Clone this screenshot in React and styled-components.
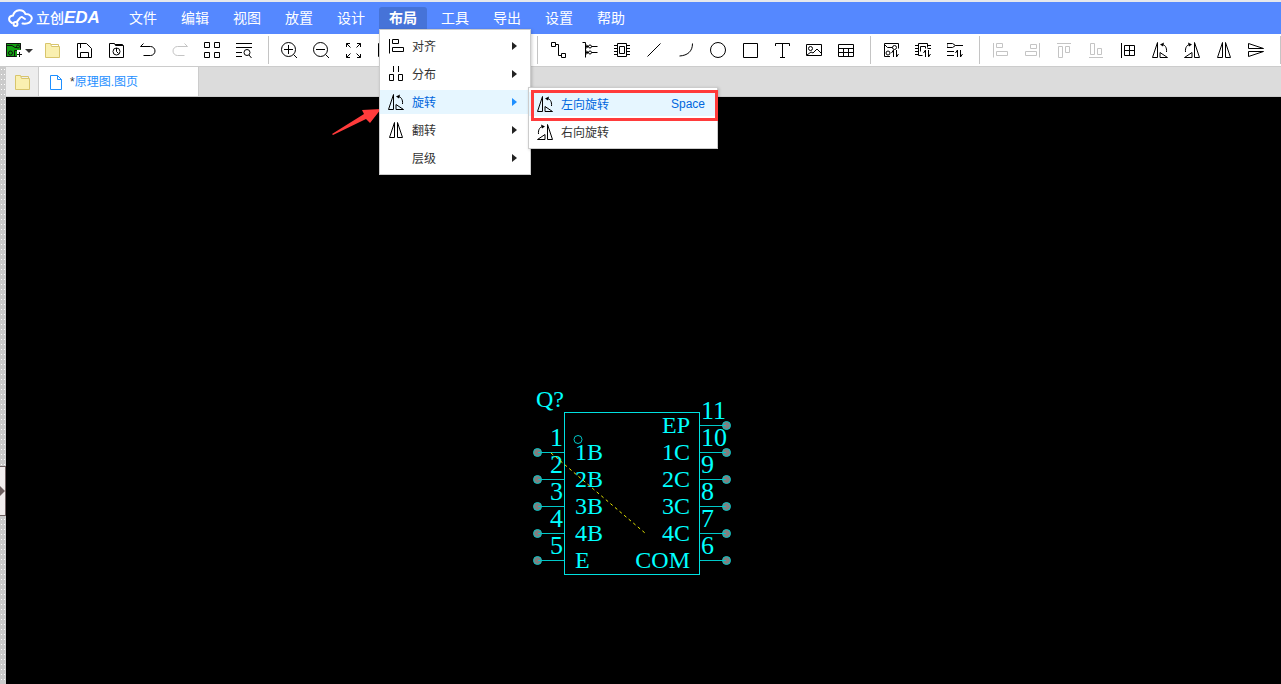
import React from 'react';
import styled, {createGlobalStyle} from 'styled-components';

const GlobalStyle = createGlobalStyle`
    *{
        box-sizing: border-box;
    }

    body{
        margin: 0;
        font-family: "Liberation Sans", "Noto Sans CJK SC", sans-serif;
        font-size: 12px;
        color: #333;
    }

    button{
        font: inherit;
        color: inherit;
        border: 0;
        padding: 0;
        background: none;
    }

    ul{
        list-style: none;
        margin: 0;
        padding: 0;
    }
`;

const Page = styled.div`
    display: flex;
    flex-direction: column;
    min-height: 100vh;
    overflow: hidden;
`;

const Header = styled.header`
    display: flex;
    align-items: center;
    height: 34px;
    padding-left: 8px;
    background: #5588ff;
    border-top: 2px solid #e6e8ec;
`;

const Logo = styled.a`
    display: flex;
    align-items: center;
    width: 111px;
    color: #fff;
    text-decoration: none;
    font-size: 14px;
    font-weight: 500;
    line-height: 20px;

    svg{
        margin-right: 3px;
    }

    em{
        font-size: 17px;
        font-weight: bold;
    }
`;

const MenuBar = styled.ul`
    display: flex;
    gap: 4px;
`;

const MenuEntry = styled.li`
    position: relative;
`;

const MenuButton = styled.button`
    display: block;
    width: 48px;
    height: 22px;
    line-height: 22px;
    font-size: 14px;
    color: #fff;
    text-align: center;
    white-space: nowrap;
    font-weight: ${({$open}) => $open ? 'bold' : 'normal'};
    background: ${({$open}) => $open ? '#4673d8' : 'transparent'};
    border-radius: 3px 3px 0 0;
`;

const Dropdown = styled.ul`
    position: absolute;
    z-index: 5;
    top: ${({$sub}) => $sub ? '-3px' : '22px'};
    left: ${({$sub}) => $sub ? '148px' : '0'};
    width: ${({$sub}) => $sub ? '190px' : '152px'};
    display: flex;
    flex-direction: column;
    gap: 4px;
    padding: 4px 0;
    background: #fff;
    border: 1px solid #ccc;
    box-shadow: 1px 1px 3px rgba(0, 0, 0, 0.2);
`;

const DropdownEntry = styled.li`
    position: relative;
`;

const DropdownButton = styled.button`
    display: flex;
    align-items: center;
    gap: 8px;
    width: 100%;
    height: 24px;
    padding: 0 12px 0 8px;
    color: ${({$active}) => $active ? '#0066dd' : '#333'};
    background: ${({$active}) => $active ? '#e6f6ff' : 'transparent'};

    svg{
        color: #000;
    }
`;

const ItemLabel = styled.span`
    flex: 1;
    padding-bottom: 2px;
    text-align: left;
`;

const Highlight = styled.li`
    position: absolute;
    top: 2px;
    left: 2px;
    right: -1px;
    height: 31px;
    border: 3px solid #ff3b3b;
    pointer-events: none;
`;

const Toolbar = styled.div`
    display: flex;
    align-items: center;
    height: 33px;
    padding-left: 4px;
    background: #fff;
    border-bottom: 1px solid #ccc;
    overflow: hidden;
`;

const ToolButton = styled.button`
    flex: none;
    display: flex;
    align-items: center;
    justify-content: center;
    width: 32px;
    height: 32px;
    color: ${({disabled}) => disabled ? '#c4c4c4' : '#000'};
`;

const Separator = styled.div`
    flex: none;
    width: 1px;
    height: 28px;
    margin: 0 4px 0 8px;
    background: #c4c4c4;
`;

const Workspace = styled.div`
    flex: 1;
    display: flex;
`;

const Splitter = styled.div`
    flex: none;
    width: 6px;
    background-color: #cbcbcb;
    background-image: radial-gradient(circle at center, #fff 1px, transparent 1px);
    background-size: 3px 5px;
`;

const CollapseButton = styled.button`
    display: flex;
    align-items: center;
    width: 6px;
    height: 50px;
    margin-top: 399px;
    background: #f2eeee;
    border: 1px solid #6e6060;
    border-left-width: 0;
`;

const Editor = styled.main`
    flex: 1;
    display: flex;
    flex-direction: column;
    min-width: 0;
`;

const TabBar = styled.div`
    display: flex;
    height: 30px;
    background: #dcdcdc;
    border-bottom: 1px solid #ccc;
`;

const HomeTab = styled.button`
    display: flex;
    align-items: center;
    justify-content: center;
    width: 33px;
    background: #ededed;
    border-right: 1px solid #ccc;
`;

const FileTab = styled.button`
    display: flex;
    align-items: center;
    gap: 6px;
    width: 160px;
    padding-left: 9px;
    color: #1e8fff;
    background: #fff;
    border-right: 1px solid #ccc;

    span{
        padding-bottom: 2px;
    }

    b{
        font-weight: normal;
        color: #333;
    }
`;

const Canvas = styled.div`
    flex: 1;
    position: relative;
    background: #000;
`;

const Schematic = styled.svg`
    position: absolute;
    left: 524px;
    top: 283px;
    font-family: "Liberation Serif", serif;
`;

const PinText = styled.text`
    font-size: ${({$number}) => $number ? '26px' : '24px'};
    fill: #0ff;
    stroke: none;
`;

const Pointer = styled.svg`
    position: absolute;
    left: 326px;
    top: 11px;
`;

const icons = {
    pcb: <>
        <path d="M0 1h15v7h-4v7H0z" fill="#12a012" stroke="none" />
        <path d="M.5 1.5h14v6M.5 1.5v13h10M1 3.5h5l3 2h2" />
        <circle cx="12" cy="4.5" r="1.5" />
        <circle cx="4.5" cy="11" r="2" />
        <path d="M8.500 14V8.5H11M11 12.5h5M13.5 10v5" />
    </>,
    folder: <>
        <path d="M1.500 1.500h5l1 3h8v11h-14z" fill="#faf0b0" stroke="#d8c56c" />
        <path d="M7 2.500h7.500v2" stroke="#d8c56c" />
    </>,
    save: <path d="M1.500 1.500h9l5 5v9h-14zM4.500 15v-4.500h8V15M4.500 2v4" />,
    history: <>
        <path d="M1.500 1.500h5l1 2h8v12h-14zM7 2.500h7.500v1" />
        <circle cx="8.500" cy="9.500" r="3.500" />
        <path d="M8.500 6v3.500l2 2" />
    </>,
    undo: <path d="M3.5 1.5l-3 3h10a4.5 4.5 0 0 1 0 9h-7" />,
    redo: <path d="M12.5 1.5l3 3h-10a4.5 4.5 0 0 0 0 9h7" />,
    grid: <path d="M.5.5h5v5h-5zM10.5.5h5v5h-5zM.5 10.5h5v5h-5zM10.5 10.5h5v5h-5z" />,
    find: <>
        <path d="M0 1.5h16M0 5.5h16M0 10.5h6M0 14.5h6M13 13l2.5 3" />
        <circle cx="11" cy="10.5" r="3" />
    </>,
    zoomIn: <>
        <circle cx="7.5" cy="7.5" r="7" />
        <path d="M12.5 12.5l3.5 3.5M3 7.5h9M7.5 3v9" />
    </>,
    zoomOut: <>
        <circle cx="7.5" cy="7.5" r="7" />
        <path d="M12.5 12.5l3.5 3.5M3 7.5h9" />
    </>,
    fit: <path d="M1.5 5V1.5H5M12 1.5h3.500V5M15.500 12v3.5H12M5 15.5H1.5V12M1.5 1.5l4 4M15.500 1.5l-4 4M15.500 15.5l-4-4M1.5 15.5l4-4" />,
    frame: <path d="M1.500 1.5h14v13h-14z" />,
    wire: <path d="M1.5.5h4v4h-4zM5.5 2.5h3v11h3M11.5 11.5h4v4h-4z" />,
    bus: <>
        <path d="M.5.5h3v15M3.5 2.5l3 2M3.5 8.5l3 2M3.5 6.5l3-2M3.5 12.5l3-2M3.5 4.5h3M3.500 10.500h3M9.500 4.500h6M9.5 10.5h6" />
        <circle cx="8" cy="4.5" r="1.5" />
        <circle cx="8" cy="10.5" r="1.5" />
    </>,
    chip: <path d="M3.5 1.5h9v13h-9zM5.5 4.5h5v7h-5zM0 3.5h3.5M0 6.5h3.5M0 9.5h3.5M0 12.5h3.5M12.5 3.5H16M12.5 6.5H16M12.5 9.5H16M12.5 12.5H16" />,
    line: <path d="M1.5 14.5l13-13" />,
    arc: <path d="M14.5 1.5c0 8-5 12-13 12.5" />,
    circle: <circle cx="8" cy="8" r="7.5" />,
    rect: <path d="M1.5 1.5h14v14h-14z" />,
    text: <path d="M1.5 4V1.5h14V4M8.5 1.5v14M6 15.5h5" />,
    image: <>
        <path d="M.5 2.5h15v11H.5zM1 13l4-3 2 1 4-4 4 4" />
        <circle cx="4.5" cy="6.5" r="2" />
    </>,
    table: <path d="M.5 2.5h15v12H.5zM.5 6.5h15M.5 10.5h15M5.5 6.5v8M10.5 6.5v8" />,
    boardSwap: <>
        <path d="M7 14.5H1.5v-13h14v5M1.5 2.5l3 3h5M10.500 15V8l-2 3M13.500 8v7l2-3" />
        <circle cx="11.5" cy="5.5" r="2" />
        <circle cx="5" cy="11" r="2" />
    </>,
    chipSwap: <path d="M7.5 13.5h-4v-12h9v4M5.5 9.5v-5h5v2M0 3.5h3.5M0 6.5h3.5M0 9.5h3.5M0 12.5h3.5M12.5 3.5H16M12.5 6.5H16M10.5 15V8l-2 3M13.5 8v7l2-3" />,
    listSwap: <path d="M0 1.5h5.5l3 2-3 2H0zM8.5 3.5H16M0 9.5h7M0 13.5h7M10.5 15V8l-2 3M13.5 8v7l2-3" />,
    alignLeft: <path d="M1.5 1v14.500M4.500 1.5h6v4h-6zM4.500 9.5h11v4h-11z" />,
    alignRight: <path d="M15.5 1v14.500M6.5 2.5h6v4h-6zM1.5 9.5h11v4h-11z" />,
    alignTop: <path d="M1 1.5h14M2.5 4.5h4v11h-4zM9.5 4.5h4v6h-4z" />,
    alignBottom: <path d="M1 15.5h14M2.5 1.5h4v11h-4zM9.5 6.5h4v6h-4z" />,
    alignGrid: <path d="M1.5 1v15M4.5 3.5h10v10h-10zM9.5 3.5v10M4.5 8.5h10" />,
    distribute: <path d="M5.500 0v6M10.500 0v6M1.500 8.5h4v6h-4zM10.500 8.5h4v6h-4z" />,
    rotateLeft: <>
        <path d="M.5 15.5L5.5.5v15zM8 10.500l7.5 5H8z" />
        <path d="M9.5 2.5c3.500 0 5.500 3 5 7.5" />
        <path d="M8 2.500l4-2-1 4z" fill="currentColor" stroke="none" />
    </>,
    rotateRight: <>
        <path d="M15.5 15.5L10.5.5v15zM8 10.500L.5 15.5H8z" />
        <path d="M6.5 2.5c-3.500 0-5.500 3-5 7.5" />
        <path d="M8 2.500l-4-2 1 4z" fill="currentColor" stroke="none" />
    </>,
    flipH: <path d="M1.500 15.5L6.5.5v15zM14.500 15.5L9.5.5v15z" />,
    flipV: <path d="M.5 1.500l15 5H.5zM.5 14.500l15-5H.5z" />,
    file: <path d="M2.5 1.5h7l4 4v10h-11zM9.5 1.5v4h4" />,
};

const Icon = ({name}) => (
    <svg width="16" height="16" viewBox="0 0 16 16" fill="none" stroke="currentColor" aria-hidden="true">
        {icons[name]}
    </svg>
);

const SubArrow = ({active}) => (
    <svg width="6" height="8" viewBox="0 0 6 8" aria-hidden="true">
        <path d="M0 0l5 4-5 4z" fill={active ? '#1e8fff' : '#222'} />
    </svg>
);

const layoutMenu = [
    {label: '对齐', icon: 'alignLeft', arrow: true},
    {label: '分布', icon: 'distribute', arrow: true},
    {
        label: '旋转',
        icon: 'rotateLeft',
        arrow: true,
        active: true,
        children: [
            {label: '左向旋转', icon: 'rotateLeft', shortcut: 'Space', active: true},
            {label: '右向旋转', icon: 'rotateRight'},
        ],
    },
    {label: '翻转', icon: 'flipH', arrow: true},
    {label: '层级', arrow: true},
];

const menus = ['文件', '编辑', '视图', '放置', '设计', '布局', '工具', '导出', '设置', '帮助'];

// each inner list is one block of the toolbar, blocks are split by a separator
const tools = [
    [['folder', '打开'], ['save', '保存'], ['history', '历史'], ['undo', '撤销'], ['redo', '重做', true], ['grid', '元件库'], ['find', '查找']],
    [['zoomIn', '放大'], ['zoomOut', '缩小'], ['fit', '适合窗口'], ['frame', '框选'], ['rect', '选择'], ['flipH', '镜像'], ['table', '网格'], ['find', '浏览']],
    [['wire', '导线'], ['bus', '总线'], ['chip', '器件'], ['line', '线条'], ['arc', '圆弧'], ['circle', '圆形'], ['rect', '矩形'], ['text', '文本'], ['image', '图片'], ['table', '表格']],
    [['boardSwap', '更新PCB'], ['chipSwap', '更新器件'], ['listSwap', '更新网络']],
    [['alignLeft', '左对齐', true], ['alignRight', '右对齐', true], ['alignTop', '顶对齐', true], ['alignBottom', '底对齐', true], ['alignGrid', '对齐网格'], ['rotateLeft', '左转'], ['rotateRight', '右转'], ['flipH', '水平翻转'], ['flipV', '垂直翻转']],
];

const leftPins = ['1B', '2B', '3B', '4B', 'E'];
const rightPins = ['EP', '1C', '2C', '3C', '4C', 'COM'];
const pitch = 27;

const MenuItem = ({item}) => (
    <DropdownEntry>
        <DropdownButton $active={item.active}>
            <Icon name={item.icon} />
            <ItemLabel>{item.label}</ItemLabel>
            {item.shortcut}
            {item.arrow && <SubArrow active={item.active} />}
        </DropdownButton>
        {item.children &&
            <Dropdown $sub>
                {item.children.map(child => <MenuItem key={child.label} item={child} />)}
                <Highlight />
            </Dropdown>
        }
    </DropdownEntry>
);

const TopMenu = () => (
    <Header>
        <Logo href="#" aria-label="立创EDA">
            <svg width="25" height="20" viewBox="0 0 25 20" fill="none" stroke="#fff" strokeWidth="2" strokeLinecap="round">
                <path d="M4 15C0 13 0 8 5 7.500 7 1 15 .5 17.500 6c5 0 7 3 6 5.500-1 3.500-5 4.500-9 4" />
                <path d="M17 11l-3-2c-2-1-3.500 4-5.500 5" />
                <circle cx="7.500" cy="16" r="2" />
            </svg>
            立创<em>EDA</em>
        </Logo>
        <nav>
            <MenuBar>
                {menus.map(name => (
                    <MenuEntry key={name}>
                        <MenuButton $open={name === '布局'}>{name}</MenuButton>
                        {name === '布局' &&
                            <Dropdown>
                                {layoutMenu.map(item => <MenuItem key={item.label} item={item} />)}
                            </Dropdown>
                        }
                    </MenuEntry>
                ))}
            </MenuBar>
        </nav>
    </Header>
);

const Tools = () => (
    <Toolbar>
        <ToolButton aria-label="新建">
            <svg width="28" height="16" viewBox="0 0 28 16" fill="none" stroke="#111" aria-hidden="true">
                {icons.pcb}
                <path d="M19 7h8l-4 4z" fill="#333" stroke="none" />
            </svg>
        </ToolButton>
        {tools.map((group, i) => (
            <React.Fragment key={i}>
                {group.map(([icon, label, disabled]) => (
                    <ToolButton key={label} aria-label={label} disabled={disabled}>
                        <Icon name={icon} />
                    </ToolButton>
                ))}
                <Separator />
            </React.Fragment>
        ))}
    </Toolbar>
);

const Component = () => (
    <Schematic width="210" height="210" viewBox="0 0 210 210" fill="none" stroke="#00c8c8">
        <rect x="34.5" y="32.5" width="135" height="162" stroke="#00e0e0" />
        <circle cx="48" cy="59.5" r="4" />
        {leftPins.map((name, i) => {
            const y = 72.5 + i * pitch;
            return (
                <g key={name}>
                    <circle cx="7.5" cy={y} r="4" fill="#808080" />
                    <path d={`M8 ${y}H34`} />
                    <PinText $number x="33" y={y - 7} textAnchor="end">{i + 1}</PinText>
                    <PinText x="45" y={y + 7}>{name}</PinText>
                </g>
            );
        })}
        {rightPins.map((name, i) => {
            const y = 45.5 + i * pitch;
            return (
                <g key={name}>
                    <circle cx="196.5" cy={y} r="4" fill="#808080" />
                    <path d={`M170 ${y}H196`} />
                    <PinText $number x="171" y={y - 7}>{11 - i}</PinText>
                    <PinText x="160" y={y + 7} textAnchor="end">{name}</PinText>
                </g>
            );
        })}
        <PinText x="6" y="27">Q?</PinText>
        <path d="M21 73l94 80" stroke="#e6e600" strokeDasharray="3 3" />
    </Schematic>
);

const App = () => {

    return(

        <Page>
            <GlobalStyle />
            <TopMenu />
            <Tools />
            <Workspace>
                <Splitter>
                    <CollapseButton aria-label="展开">
                        <svg width="5" height="10" viewBox="0 0 5 10">
                            <path d="M0 0l5 5-5 5z" fill="#6e6060" />
                        </svg>
                    </CollapseButton>
                </Splitter>
                <Editor>
                    <TabBar>
                        <HomeTab aria-label="工程">
                            <Icon name="folder" />
                        </HomeTab>
                        <FileTab>
                            <Icon name="file" />
                            <span><b>*</b>原理图.图页</span>
                        </FileTab>
                    </TabBar>
                    <Canvas>
                        <Pointer width="50" height="28" viewBox="0 0 50 28">
                            <path d="M0 26L32 6 30 2l19-1-11 14-4-4L1 27z" fill="#ff3b3b" />
                        </Pointer>
                        <Component />
                    </Canvas>
                </Editor>
            </Workspace>
        </Page>

    )

}

export default App
